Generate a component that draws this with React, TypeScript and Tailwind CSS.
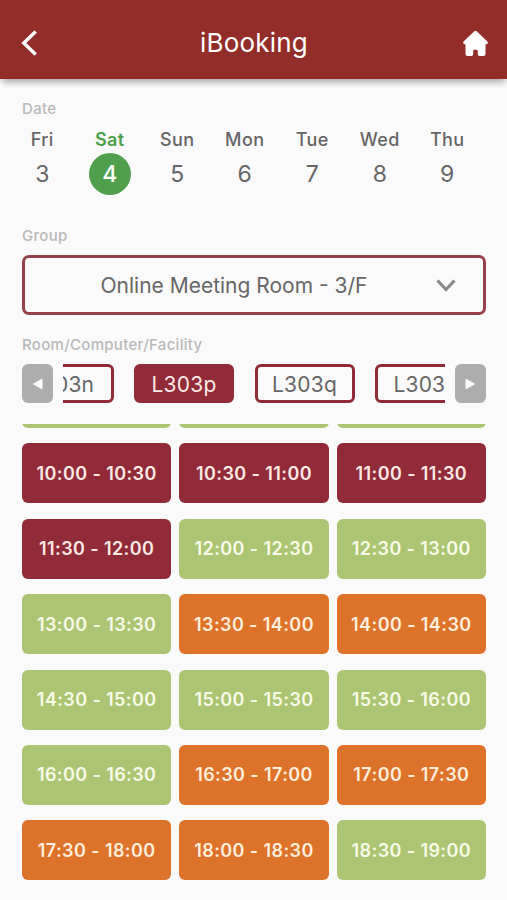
import React, { useState } from 'react';
import clsx from 'clsx';

type SlotStatus = 'booked' | 'free' | 'pending';

interface Slot {
  time: string;
  status: SlotStatus;
}

const days = [
  { name: 'Fri', date: 3 },
  { name: 'Sat', date: 4 },
  { name: 'Sun', date: 5 },
  { name: 'Mon', date: 6 },
  { name: 'Tue', date: 7 },
  { name: 'Wed', date: 8 },
  { name: 'Thu', date: 9 },
];

const rooms = ['L303n', 'L303p', 'L303q', 'L303s'];

const slots: Slot[] = [
  { time: '10:00 - 10:30', status: 'booked' },
  { time: '10:30 - 11:00', status: 'booked' },
  { time: '11:00 - 11:30', status: 'booked' },
  { time: '11:30 - 12:00', status: 'booked' },
  { time: '12:00 - 12:30', status: 'free' },
  { time: '12:30 - 13:00', status: 'free' },
  { time: '13:00 - 13:30', status: 'free' },
  { time: '13:30 - 14:00', status: 'pending' },
  { time: '14:00 - 14:30', status: 'pending' },
  { time: '14:30 - 15:00', status: 'free' },
  { time: '15:00 - 15:30', status: 'free' },
  { time: '15:30 - 16:00', status: 'free' },
  { time: '16:00 - 16:30', status: 'free' },
  { time: '16:30 - 17:00', status: 'pending' },
  { time: '17:00 - 17:30', status: 'pending' },
  { time: '17:30 - 18:00', status: 'pending' },
  { time: '18:00 - 18:30', status: 'pending' },
  { time: '18:30 - 19:00', status: 'free' },
];

const slotColors: Record<SlotStatus, string> = {
  booked: 'bg-[#912b38] text-[#fbe9e4]',
  free: 'bg-[#acc572] text-[#f8fbe9]',
  pending: 'bg-[#dd722a] text-[#fdeedd]',
};

const Label: React.FC<{ children: React.ReactNode }> = ({ children }) => (
  <div className="h-5 text-[15px] leading-5 font-medium tracking-[0.3px] text-[#b9b9b9]">{children}</div>
);

const ArrowButton: React.FC<{ dir: 'left' | 'right'; onClick: () => void }> = ({ dir, onClick }) => (
  <button
    onClick={onClick}
    className="flex h-[39px] w-[31px] shrink-0 items-center justify-center rounded-md bg-[#adadad]"
  >
    <svg width="11" height="12" viewBox="0 0 11 12" className={clsx(dir === 'left' && 'rotate-180')}>
      <path d="M0.5 0.5 L10.5 6 L0.5 11.5 Z" fill="#fafafa" />
    </svg>
  </button>
);

export default function App() {
  const [day, setDay] = useState(4);
  const [room, setRoom] = useState(1);

  return (
    <div className="flex h-[900px] w-[507px] flex-col overflow-hidden bg-[#fafafa] font-['Inter',sans-serif] text-[#666]">
      <header className="flex h-[79px] shrink-0 items-center justify-between bg-[#922d29] pt-[7px] pr-[18px] pl-[21px] text-white shadow-[0_5px_7px_-2px_rgba(0,0,0,0.35)]">
        <button className="w-7">
          <svg width="17" height="26" viewBox="0 0 17 26" fill="none" stroke="currentColor" strokeWidth="3.4">
            <path d="M14.7 1.5 L2.8 13 L14.7 24.5" />
          </svg>
        </button>
        <h1 className="pr-[2px] text-[26px] leading-8 tracking-[0.2px]">iBooking</h1>
        <button className="flex w-7 justify-end">
          <svg width="27" height="27" viewBox="0 0 27 27" fill="currentColor">
            <path d="M12.3 1.2 Q13.5 0.2 14.7 1.2 L25.4 11.4 Q26.4 12.6 25.4 13.7 Q24.7 14.4 23.5 14.2 V23.9 Q23.5 26 21.4 26 H17.6 Q15.8 26 15.8 24.2 V21 Q15.8 19.8 14.6 19.8 H12.4 Q11.2 19.8 11.2 21 V24.2 Q11.2 26 9.4 26 H5.6 Q3.5 26 3.5 23.9 V14.2 Q2.3 14.4 1.6 13.7 Q0.6 12.6 1.6 11.4 Z" />
          </svg>
        </button>
      </header>

      <main className="flex min-h-0 flex-1 flex-col pt-5 pr-[21px] pl-[22px]">
        <Label>Date</Label>
        <div className="-mx-[13.5px] mt-[9px] flex">
          {days.map((d) => (
            <button key={d.date} onClick={() => setDay(d.date)} className="flex w-[67.5px] shrink-0 flex-col items-center">
              <span
                className={clsx(
                  'pt-px text-lg leading-[22px] tracking-[0.4px]',
                  day === d.date ? 'font-semibold text-[#4c9f4b]' : 'font-medium'
                )}
              >
                {d.name}
              </span>
              <span
                className={clsx(
                  'mt-[2px] flex size-[42px] items-center justify-center rounded-full pt-px text-[23px]',
                  day === d.date && 'bg-[#4f9f4d] font-medium text-white'
                )}
              >
                {d.date}
              </span>
            </button>
          ))}
        </div>

        <div className="mt-[31px]">
          <Label>Group</Label>
        </div>
        <button className="mt-[9px] flex h-[60px] shrink-0 items-center rounded-[7px] border-3 border-[#96404b] pr-[27px]">
          <span className="flex-1 pt-px pl-[7px] text-[21px]">Online Meeting Room - 3/F</span>
          <svg width="20" height="13" viewBox="0 0 20 13" fill="none" stroke="#888" strokeWidth="3.2">
            <path d="M1.5 1.5 L10 10.5 L18.5 1.5" />
          </svg>
        </button>

        <div className="mt-[20px]">
          <Label>Room/Computer/Facility</Label>
        </div>
        <div className="mt-[9px] flex items-center justify-between">
          <ArrowButton dir="left" onClick={() => setRoom(Math.max(0, room - 1))} />
          <div className="w-[382px] overflow-hidden">
            <div className="-ml-[49.5px] flex gap-[20.5px]">
              {rooms.map((name, i) => (
                <button
                  key={name}
                  onClick={() => setRoom(i)}
                  className={clsx(
                    'h-[39px] w-[100px] shrink-0 rounded-md border-3 border-[#922b38] pt-px text-[21px] leading-none tracking-[0.2px]',
                    room === i && 'bg-[#922b38] text-[#fbe9e4]',
                    i === 0 && 'pr-[3px]'
                  )}
                >
                  {name}
                </button>
              ))}
            </div>
          </div>
          <ArrowButton dir="right" onClick={() => setRoom(Math.min(rooms.length - 1, room + 1))} />
        </div>

        {/* Time slots, scrolled past the 08:30 - 10:00 row */}
        <div className="mt-[21px] min-h-0 flex-1 overflow-hidden">
          <div className="-mt-[56px] grid grid-cols-3 gap-x-2 gap-y-[15.4px]">
            {[0, 1, 2].map((i) => (
              <div key={i} className="h-[60px] rounded-md bg-[#acc572]" />
            ))}
            {slots.map((slot) => (
              <button
                key={slot.time}
                className={clsx(
                  'h-[60px] rounded-md pt-px text-lg font-semibold tracking-[0.4px] whitespace-nowrap',
                  slotColors[slot.status]
                )}
              >
                {slot.time}
              </button>
            ))}
          </div>
        </div>
      </main>
    </div>
  );
}
